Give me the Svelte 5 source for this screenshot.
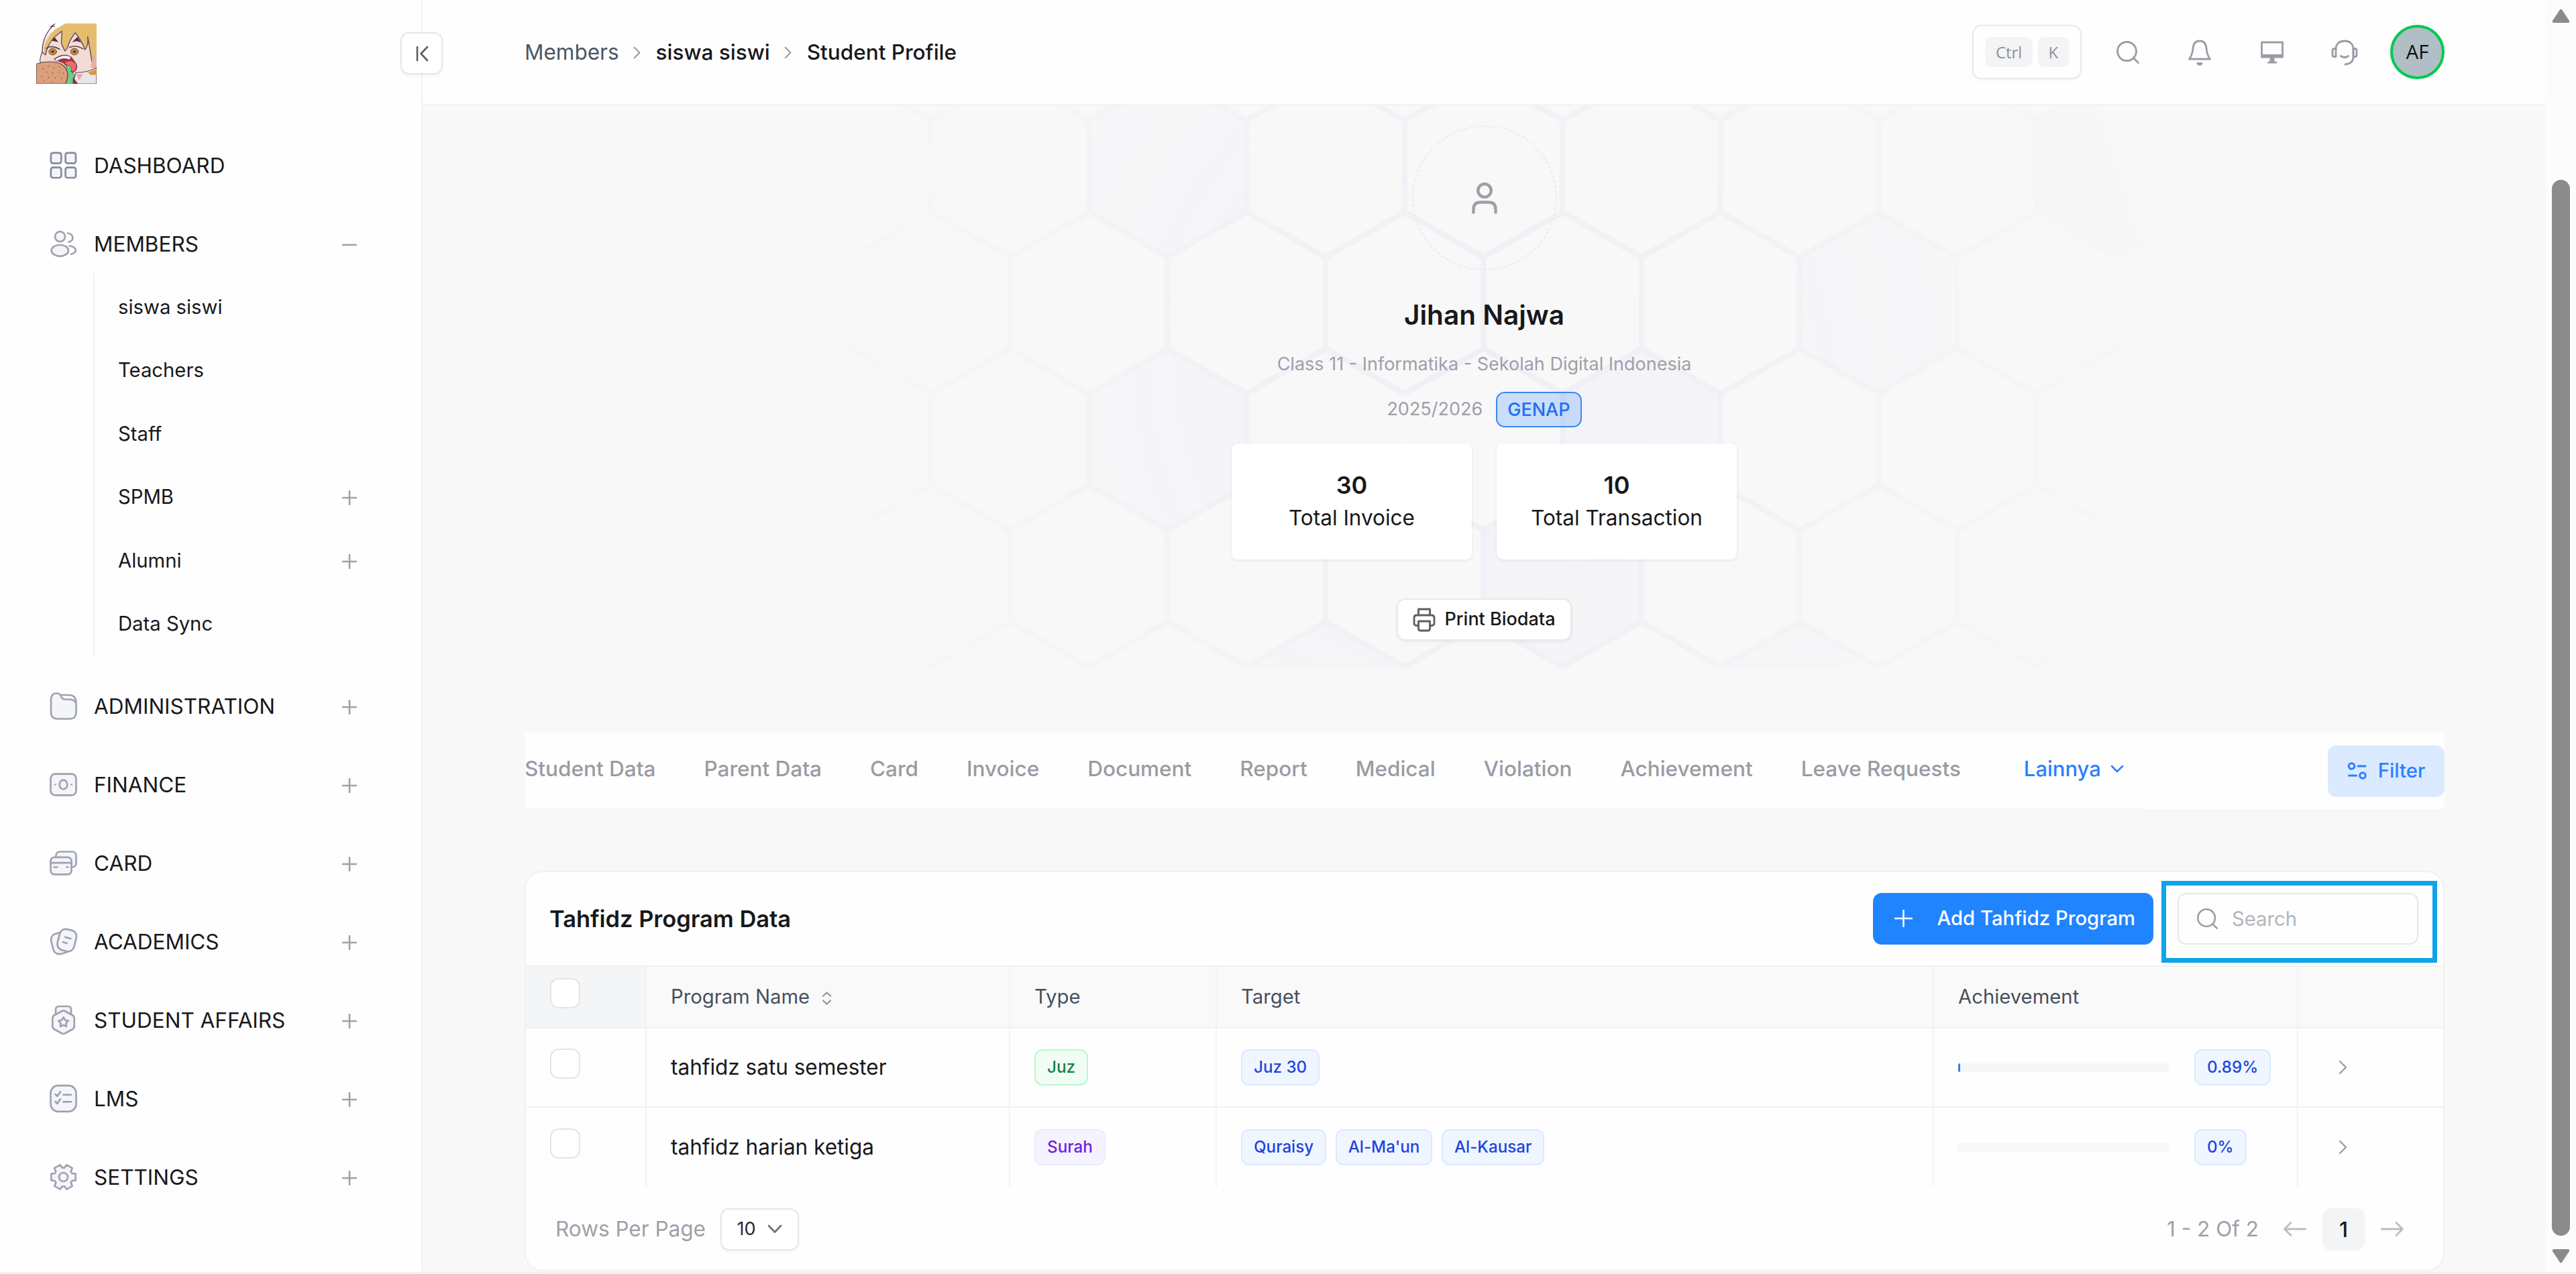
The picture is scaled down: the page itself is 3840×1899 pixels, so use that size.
<script>
    const menu = [
        { id: "dashboard", label: "DASHBOARD" },
        {
            id: "members",
            label: "MEMBERS",
            open: true,
            children: [
                { label: "siswa siswi" },
                { label: "Teachers" },
                { label: "Staff" },
                { label: "SPMB", more: true },
                { label: "Alumni", more: true },
                { label: "Data Sync" },
            ],
        },
        { id: "administration", label: "ADMINISTRATION", more: true },
        { id: "finance", label: "FINANCE", more: true },
        { id: "card", label: "CARD", more: true },
        { id: "academics", label: "ACADEMICS", more: true },
        { id: "affairs", label: "STUDENT AFFAIRS", more: true },
        { id: "lms", label: "LMS", more: true },
        { id: "settings", label: "SETTINGS", more: true },
    ];

    const tabs = [
        "Student Data",
        "Parent Data",
        "Card",
        "Invoice",
        "Document",
        "Report",
        "Medical",
        "Violation",
        "Achievement",
        "Leave Requests",
    ];

    const stats = [
        { value: 30, label: "Total Invoice" },
        { value: 10, label: "Total Transaction" },
    ];

    const programs = [
        {
            name: "tahfidz satu semester",
            type: "Juz",
            tone: "green",
            targets: ["Juz 30"],
            progress: 0.89,
        },
        {
            name: "tahfidz harian ketiga",
            type: "Surah",
            tone: "violet",
            targets: ["Quraisy", "Al-Ma'un", "Al-Kausar"],
            progress: 0,
        },
    ];

    // honeycomb behind the profile
    const HEX_W = 235.5;
    const HEX_PITCH = 203.5;

    function hexPoints(cx, cy) {
        const w = HEX_W / 2;
        return [
            [cx, cy - 135],
            [cx + w, cy - 68],
            [cx + w, cy + 68],
            [cx, cy + 135],
            [cx - w, cy + 68],
            [cx - w, cy - 68],
        ]
            .map((p) => p.join(","))
            .join(" ");
    }

    const tinted = ["1:-2", "3:-2", "3:1", "4:1", "2:3", "5:-1", "5:2", "1:4"];
    const hexes = [];
    for (let row = 0; row < 6; row++) {
        for (let col = -5; col <= 5; col++) {
            const shift = row % 2 ? 0 : -HEX_W / 2;
            hexes.push({
                points: hexPoints(2211.5 + shift + col * HEX_W, 44.5 + row * HEX_PITCH),
                tint: tinted.includes(`${row}:${col}`),
            });
        }
    }

    function gearPath() {
        const pts = [];
        for (let k = 0; k < 6; k++) {
            for (const [off, r] of [
                [-23, 14],
                [-15, 18.8],
                [15, 18.8],
                [23, 14],
            ]) {
                const a = ((k * 60 + off) * Math.PI) / 180;
                pts.push(
                    `${(22.5 + r * Math.cos(a)).toFixed(1)} ${(22.5 + r * Math.sin(a)).toFixed(1)}`,
                );
            }
        }
        return "M" + pts.join("L") + "Z";
    }
</script>

{#snippet menuIcon(id)}
    <svg class="menu-icon" class:strong={id === "dashboard"} viewBox="0 0 45 45">
        {#if id === "dashboard"}
            <rect x="3.9" y="3.9" width="15.4" height="15.4" rx="3" />
            <rect x="25.6" y="3.9" width="15.4" height="15.4" rx="3" />
            <rect x="3.9" y="25.6" width="15.4" height="15.4" rx="3" />
            <rect x="25.6" y="25.6" width="15.4" height="15.4" rx="3" />
        {:else if id === "members"}
            <circle cx="17.5" cy="11.7" r="7.5" />
            <ellipse cx="17.3" cy="32.4" rx="12.6" ry="8.4" />
            <path class="line" d="M29 6.5c9 1 10 12 1.5 13.2M31.5 25.5c12 2 12 10 2.5 12.3" />
        {:else if id === "administration"}
            <path class="line" d="M17.5 6H31c6 0 10 3.5 10.5 11" />
            <path
                d="M4 14C4 6 7 3.5 12 3.5c6 0 6 2.5 7.5 5.5 1 2.5 2.5 3.5 5.5 3.5h6c7 0 10.5 2.5 10.5 8.5v10c0 7.5-3 10.5-10.5 10.5H14.5C7 41.5 4 38.5 4 31Z"
            />
        {:else if id === "finance"}
            <rect x="3.5" y="6.7" width="38" height="31.6" rx="6.5" />
            <ellipse cx="22.5" cy="22.5" rx="5.8" ry="6.8" />
            <path class="line" d="M10.3 22.5h.2M34.5 22.5h.2" />
        {:else if id === "card"}
            <rect x="11.5" y="5.5" width="30" height="23" rx="5.5" />
            <rect x="3.5" y="13.8" width="31" height="25.5" rx="5.5" />
            <path class="line" d="M3.5 22.2h31M8.5 28.5h5M27.5 28.5h2" />
        {:else if id === "academics"}
            <rect x="5.5" y="9.5" width="25" height="31" rx="9" transform="rotate(-14 18 25)" />
            <rect x="15" y="4.5" width="25.5" height="32" rx="9" transform="rotate(14 27.7 20.5)" />
            <path class="line" d="M25 15.7l8.2 2.4M22 23.3l5.5 1.7" />
        {:else if id === "affairs"}
            <path d="M11 14V7c0-3.5 2-5 5-5h13c3 0 5 1.5 5 5v7" />
            <path
                d="M20 9.2q2.5-1.6 5 0l11 6q2.7 1.6 2.7 4.5v12q0 2.9-2.7 4.5l-11 6q-2.5 1.6-5 0l-11-6q-2.7-1.6-2.7-4.5v-12q0-2.9 2.7-4.5z"
            />
            <path
                d="M22.5 18.5l2.5 4 4.7 1-3.2 3.6.5 4.8-4.5-1.9-4.5 1.9.5-4.8-3.2-3.6 4.7-1z"
            />
        {:else if id === "lms"}
            <rect x="3.5" y="3.2" width="38" height="38.6" rx="11" />
            <path class="line" d="M10.5 16l3 3 4.3-6.5M10.5 27l3 3 4.3-6.5M22.5 16.8h11.5M22.5 27.3h11.5" />
        {:else}
            <path d={gearPath()} />
            <circle cx="22.5" cy="22.5" r="6.5" />
        {/if}
    </svg>
{/snippet}

{#snippet toggle(open)}
    <svg class="toggle" viewBox="0 0 22 22">
        <path d={open ? "M1 11h20" : "M1 11h20M11 1v20"} />
    </svg>
{/snippet}

{#snippet chevron()}
    <svg class="chevron" viewBox="0 0 14 22"><path d="M2 2l9 9-9 9" /></svg>
{/snippet}

{#snippet searchIcon()}
    <svg class="search-icon" viewBox="0 0 36 36">
        <circle cx="16.5" cy="16.5" r="14" />
        <path d="M26.5 26.5l7 7" />
    </svg>
{/snippet}

<div class="page">
    <div class="shell">
        <aside>
            <div class="brand">
                <svg class="logo" viewBox="0 0 202 253" preserveAspectRatio="none">
                    <rect width="202" height="253" fill="#fff" />
                    <path d="M44 40C20 80 14 120 20 140L10 175 30 253H202V30L100 10Z" fill="#f3dcd6" />
                    <path
                        d="M98 0H202V150L188 170Q178 130 174 62 176 92 163 110 152 68 131 39 108 76 104 104L96 116Q88 96 84 84L86 32Q66 50 48 72 34 100 31 132 14 90 62 26Z"
                        fill="#e4bd6f"
                    />
                    <path
                        d="M62 2Q20 50 20 120L31 132Q36 92 60 58L86 32 84 84 96 116 104 104Q112 66 131 39 152 72 163 110 176 90 172 54L188 170M190 150L202 130M20 120Q8 160 16 165M62 2l-14 12 14-2"
                        fill="none"
                        stroke="#634055"
                        stroke-width="3"
                    />
                    <path d="M52 72l10-14 12 20-16-4zM120 78l18-22 12 24-14-6z" fill="#4b2f3d" />
                    <path d="M34 104q18-16 44 4M112 100q20-12 44 6" fill="none" stroke="#4b2f3d" stroke-width="4" />
                    <ellipse cx="55" cy="118" rx="13" ry="14" fill="#c88b31" stroke="#634055" stroke-width="2" />
                    <ellipse cx="128" cy="118" rx="13" ry="14" fill="#c88b31" stroke="#634055" stroke-width="2" />
                    <circle cx="55" cy="118" r="5" fill="#4b2f3d" />
                    <circle cx="128" cy="118" r="5" fill="#4b2f3d" />
                    <path d="M60 150Q90 120 116 140L134 170Q140 196 122 206L92 166Z" fill="#b5303b" stroke="#634055" stroke-width="3" />
                    <path d="M62 150Q90 124 116 140L112 152Q90 140 68 158Z" fill="#fff" stroke="#634055" stroke-width="2" />
                    <path d="M96 166q16-18 36 2 6 24-10 34z" fill="#f2686c" />
                    <path d="M188 150l14-24v60q-22 6-20-10z" fill="#e7b0a4" />
                    <path d="M132 206q40 0 70-20v67h-80z" fill="#e8e6e8" stroke="#634055" stroke-width="3" />
                    <path d="M172 206l30-14v20q-10 6-20 2z" fill="#d59a34" />
                    <path d="M134 212h22l-12 26z" fill="#e9a3a1" />
                    <path d="M104 172l14 12-2 18 12 14-6 20 6 17H92z" fill="#6bcf83" stroke="#41805a" stroke-width="2" />
                    <path d="M124 226l16 27h-18z" fill="#8c2944" />
                    <path d="M0 170C30 156 66 158 84 170 108 188 110 222 98 253H0Z" fill="#dc9f7b" stroke="#634055" stroke-width="3" />
                    <path
                        d="M22 190h2M40 178h2M58 186h2M76 182h2M34 204h2M54 206h2M76 204h2M90 208h2M18 222h2M40 226h2M62 228h2M84 230h2M26 242h2M52 244h2"
                        stroke="#7b4a39"
                        stroke-width="3"
                    />
                </svg>
                <button class="collapse" aria-label="Collapse">
                    <svg viewBox="0 0 20 24"><path d="M3 2v20M18 2L8.5 12 18 22" /></svg>
                </button>
            </div>
            <nav>
                {#each menu as item}
                    <div class="menu-row">
                        {@render menuIcon(item.id)}
                        <span>{item.label}</span>
                        {#if item.open || item.more}{@render toggle(item.open)}{/if}
                    </div>
                    {#if item.children}
                        <div class="submenu">
                            {#each item.children as child}
                                <div class="sub-row">
                                    <span>{child.label}</span>
                                    {#if child.more}{@render toggle(false)}{/if}
                                </div>
                            {/each}
                        </div>
                    {/if}
                {/each}
            </nav>
        </aside>

        <main>
            <header>
                <div class="crumbs">
                    <span class="muted">Members</span>
                    {@render chevron()}
                    <span>siswa siswi</span>
                    {@render chevron()}
                    <span>Student Profile</span>
                </div>
                <div class="tools">
                    <div class="shortcut"><kbd>Ctrl</kbd><kbd>K</kbd></div>
                    {@render searchIcon()}
                    <svg class="tool bell" viewBox="0 0 38 40">
                        <path d="M19 3c-7 0-9.500 5-10 11-.5 7-2 11-5.500 16h31c-3.500-5-5-9-5.500-16-.5-6-3-11-10-11z" />
                        <path d="M16 36.500c1 2.500 5 2.500 6 0z" fill="currentColor" />
                    </svg>
                    <svg class="tool monitor" viewBox="0 0 38 40">
                        <path d="M3.500 5h31v22h-31z" />
                        <path d="M3 23h32v5H22l1 6h3v2.500H12V34h3l1-6H3z" fill="currentColor" stroke="none" />
                    </svg>
                    <svg class="tool headset" viewBox="0 0 40 40">
                        <path d="M7 15C7 7 13 3 20 3s13 4 13 12v12c0 6-4 10-12 11" />
                        <path d="M7 14.500H4.500Q2 14.500 2 17v7q0 2.500 2.500 2.500H7zM33 14.500h2.500Q38 14.500 38 17v7q0 2.500-2.500 2.500H33z" />
                        <path d="M14.500 25.500q5.500 4 11 0" />
                    </svg>
                    <div class="avatar">AF</div>
                </div>
            </header>

            <section class="hero">
                <svg class="comb" viewBox="630 157 3165 935">
                    <defs>
                        <radialGradient
                            id="fade"
                            gradientUnits="userSpaceOnUse"
                            cx="2212"
                            cy="560"
                            r="1050"
                        >
                            <stop offset="0" stop-color="#fff" />
                            <stop offset=".3" stop-color="#fff" stop-opacity=".75" />
                            <stop offset=".55" stop-color="#fff" stop-opacity=".38" />
                            <stop offset="1" stop-color="#fff" stop-opacity="0" />
                        </radialGradient>
                        <mask id="vignette" maskUnits="userSpaceOnUse" x="1160" y="157" width="2100" height="840">
                            <rect x="1160" y="157" width="2100" height="840" fill="url(#fade)" />
                        </mask>
                    </defs>
                    {#each hexes as hex}
                        {#if hex.tint}
                            <polygon class="tint" points={hex.points} mask="url(#vignette)" />
                        {/if}
                    {/each}
                    <g mask="url(#vignette)">
                        {#each hexes as hex}
                            <polygon points={hex.points} />
                        {/each}
                        <path d="M2093.700 594v122" class="gap" />
                    </g>
                </svg>
                <div class="profile">
                    <div class="photo">
                        <svg class="ring" viewBox="0 0 216 216"><circle cx="108" cy="108" r="107" /></svg>
                        <svg class="person" viewBox="0 0 40 48">
                            <circle cx="20" cy="13" r="9.800" />
                            <path d="M3.500 45.500v-4c0-8 4-11 10-11h13c6 0 10 3 10 11v4" />
                        </svg>
                    </div>
                    <h1>Jihan Najwa</h1>
                    <p class="school">Class 11 - Informatika - Sekolah Digital Indonesia</p>
                    <p class="year">2025/2026 <span class="term">GENAP</span></p>
                    <div class="stats">
                        {#each stats as stat}
                            <div class="stat">
                                <strong>{stat.value}</strong>
                                <span>{stat.label}</span>
                            </div>
                        {/each}
                    </div>
                    <button class="print">
                        <svg viewBox="0 0 34 36">
                            <path d="M8.500 11V2h17v9M8.500 26.500H6Q2 26.500 2 22.500V15q0-4 4-4h22q4 0 4 4v7.500q0 4-4 4h-2.500" />
                            <path d="M8.500 20h17v11q0 3-3 3h-11q-3 0-3-3z" />
                        </svg>
                        Print Biodata
                    </button>
                </div>
            </section>

            <section class="tabbar">
                <div class="tabs">
                    {#each tabs as tab}
                        <span>{tab}</span>
                    {/each}
                    <span class="active">
                        Lainnya
                        <svg viewBox="0 0 20 12"><path d="M2 2l8 8 8-8" /></svg>
                    </span>
                </div>
                <div class="tab-side">
                    <button class="filter">
                        <svg viewBox="0 0 30 28">
                            <circle cx="6.500" cy="7" r="4.300" />
                            <circle cx="23" cy="21" r="4.300" />
                            <path d="M16 7h11M2.500 21h11" />
                        </svg>
                        Filter
                    </button>
                </div>
            </section>

            <section class="card">
                <div class="card-head">
                    <h2>Tahfidz Program Data</h2>
                    <button class="add">
                        <svg viewBox="0 0 27 26"><path d="M1 13h25M13.500 1v24" /></svg>
                        Add Tahfidz Program
                    </button>
                    <div class="search-wrap">
                        <div class="search">
                            {@render searchIcon()}
                            <span>Search</span>
                        </div>
                        <div class="highlight"></div>
                    </div>
                </div>
                <table>
                    <colgroup>
                        <col class="c-check" />
                        <col class="c-name" />
                        <col class="c-type" />
                        <col class="c-target" />
                        <col class="c-progress" />
                        <col />
                    </colgroup>
                    <thead>
                        <tr>
                            <th class="check"><i></i></th>
                            <th>
                                Program Name
                                <svg class="sort" viewBox="0 0 15 20"><path d="M2 6.500l5.500-5 5.500 5M2 13.500l5.500 5 5.500-5" /></svg>
                            </th>
                            <th>Type</th>
                            <th>Target</th>
                            <th>Achievement</th>
                            <th></th>
                        </tr>
                    </thead>
                    <tbody>
                        {#each programs as program}
                            <tr>
                                <td class="check"><i></i></td>
                                <td class="name">{program.name}</td>
                                <td><span class="chip {program.tone}">{program.type}</span></td>
                                <td>
                                    <div class="chips">
                                        {#each program.targets as target}
                                            <span class="chip">{target}</span>
                                        {/each}
                                    </div>
                                </td>
                                <td>
                                    <div class="meter">
                                        <div class="track">
                                            <div class="fill" style:width="{program.progress}%"></div>
                                        </div>
                                        <span class="chip">{program.progress}%</span>
                                    </div>
                                </td>
                                <td class="go">{@render chevron()}</td>
                            </tr>
                        {/each}
                    </tbody>
                </table>
                <div class="card-foot">
                    <span>Rows Per Page</span>
                    <div class="select">
                        10
                        <svg viewBox="0 0 22 14"><path d="M2 2l9 9.500L20 2" /></svg>
                    </div>
                    <span class="range">1 - 2 Of 2</span>
                    <svg class="arrow" viewBox="0 0 34 24"><path d="M33 12H2M11 2.500L1.500 12l9.500 9.500" /></svg>
                    <div class="current">1</div>
                    <svg class="arrow" viewBox="0 0 34 24"><path d="M1 12h31M23 2.500l9.500 9.500-9.500 9.500" /></svg>
                </div>
            </section>
        </main>

        <div class="scrollbar">
            <svg viewBox="0 0 27 21"><path d="M11.500 2q2-3 4 0l10.500 16q1 3-2 3H3q-3 0-2-3z" /></svg>
            <div class="thumb"></div>
            <svg viewBox="0 0 27 21"><path d="M11.500 19q2 3 4 0L26 3q1-3-2-3H3Q0 0 1 3z" /></svg>
        </div>
    </div>
    <div class="strip"></div>
</div>

<style>
    :global(body) {
        margin: 0;
        background: #f8f8f8;
    }
    .page {
        width: 3840px;
        height: 1899px;
        overflow: hidden;
        font-family: Inter, sans-serif;
        font-size: 31.5px;
        line-height: 1.2;
        color: #18181b;
    }
    .page * {
        box-sizing: border-box;
    }
    svg {
        display: block;
        flex: none;
        fill: none;
        stroke-linecap: round;
        stroke-linejoin: round;
    }
    button {
        font: inherit;
        padding: 0;
        border: 0;
        display: flex;
        align-items: center;
    }
    h1,
    h2,
    p {
        margin: 0;
    }
    .shell {
        display: flex;
        height: 1896px;
    }
    .strip {
        height: 3px;
        background: #f8eff1;
    }

    /* sidebar */
    aside {
        width: 630px;
        background: #fefefe;
        border-right: 2px solid #f2f2f3;
    }
    .brand {
        display: flex;
        justify-content: space-between;
        align-items: center;
        height: 159px;
        padding-left: 54px;
        margin-right: -32px;
        margin-bottom: 29px;
    }
    .logo {
        width: 90px;
        height: 90px;
    }
    .collapse {
        position: relative;
        z-index: 2;
        justify-content: center;
        width: 63px;
        height: 63px;
        background: #fff;
        border: 2px solid #e6e6e8;
        border-radius: 13px;
        box-shadow: 0 2px 4px rgba(0, 0, 0, 0.05);
    }
    .collapse svg {
        width: 20px;
        height: 24px;
        stroke: #5c5c63;
        stroke-width: 2.6;
    }
    .menu-row {
        display: flex;
        align-items: center;
        height: 117px;
        padding: 0 96px 0 72px;
    }
    .menu-row span {
        flex: 1;
        margin-left: 23px;
    }
    .menu-icon {
        width: 45px;
        height: 45px;
        stroke: #a0a2b3;
        stroke-width: 2.7;
        fill: #f4f5f8;
    }
    .menu-icon.strong {
        stroke: #878a9c;
    }
    .menu-icon .line {
        fill: none;
    }
    .toggle {
        width: 22px;
        height: 22px;
        margin-top: 3px;
        stroke: #a1a1a6;
        stroke-width: 2.6;
    }
    .submenu {
        margin: -15px 0 15px 139px;
        padding-top: 3px;
        height: 572px;
        border-left: 2px solid #f1f1f3;
    }
    .sub-row {
        display: flex;
        align-items: center;
        height: 94.5px;
        padding: 0 96px 0 35px;
        font-size: 29.25px;
    }
    .sub-row span {
        flex: 1;
    }

    /* header */
    main {
        width: 3165px;
        background: #f8f8f8;
    }
    header {
        display: flex;
        align-items: center;
        justify-content: space-between;
        height: 157px;
        padding: 0 151px 0 152px;
        background: #fefefe;
        border-bottom: 2px solid #f3f3f4;
    }
    .crumbs {
        display: flex;
        align-items: center;
        font-weight: 500;
    }
    .crumbs .muted {
        color: #4b5563;
        font-weight: 400;
    }
    .chevron {
        width: 14px;
        height: 22px;
        stroke: #9b9ba1;
        stroke-width: 2.4;
    }
    .crumbs .chevron {
        margin: 2px 20.5px 0;
        height: 19px;
    }
    .tools {
        display: flex;
        align-items: center;
        color: #9b9ba5;
    }
    .shortcut {
        display: flex;
        align-items: center;
        justify-content: center;
        gap: 8px;
        width: 163px;
        height: 81px;
        margin-right: 51px;
        border: 2px solid #e9e9eb;
        border-radius: 14px;
        box-shadow: 0 2px 4px rgba(0, 0, 0, 0.04);
    }
    kbd {
        padding: 0 15.5px;
        line-height: 45px;
        font-family: "Open Sans", sans-serif;
        font-size: 24px;
        border-radius: 9px;
        background: #f4f4f5;
        color: #8f929c;
    }
    .search-icon {
        width: 36px;
        height: 36px;
        stroke: #9b9ba1;
        stroke-width: 2.8;
    }
    .tool {
        width: 38px;
        height: 40px;
        stroke: currentColor;
        stroke-width: 2.8;
    }
    .bell {
        margin-left: 70px;
    }
    .monitor {
        margin-left: 70px;
    }
    .headset {
        width: 40px;
        margin-left: 69px;
    }
    .avatar {
        display: flex;
        align-items: center;
        justify-content: center;
        width: 81px;
        height: 81px;
        margin-left: 48px;
        border: 4.5px solid #00c951;
        border-radius: 50%;
        background: #b0bec5;
        color: #0c0c0e;
        font-family: "Open Sans", sans-serif;
        font-size: 29.25px;
    }

    /* profile */
    .hero {
        display: grid;
        height: 935px;
    }
    .comb,
    .profile {
        grid-area: 1 / 1;
    }
    .comb {
        width: 3165px;
        height: 935px;
    }
    .comb polygon {
        stroke: #eeeef5;
        stroke-width: 8;
    }
    .comb .tint {
        fill: #f3f3f8;
        stroke: none;
    }
    .comb .gap {
        stroke: #f8f8f8;
        stroke-width: 10;
    }
    .profile {
        display: flex;
        flex-direction: column;
        align-items: center;
        padding-top: 30px;
    }
    .photo {
        display: grid;
        place-items: center;
        width: 216px;
        height: 216px;
    }
    .photo svg {
        grid-area: 1 / 1;
    }
    .ring {
        width: 216px;
        height: 216px;
        stroke: #e8e8ea;
        stroke-width: 1.6;
        stroke-dasharray: 4 3.5;
        stroke-linecap: butt;
    }
    .person {
        width: 40px;
        height: 48px;
        stroke: #9f9fa9;
        stroke-width: 4.5;
    }
    h1 {
        margin-top: 43px;
        font-size: 40.5px;
        line-height: 48px;
        font-weight: 600;
    }
    .school {
        margin-top: 33px;
        font-size: 27px;
        line-height: 32px;
        color: #9f9fa9;
    }
    .year {
        display: flex;
        align-items: center;
        gap: 20px;
        margin-top: 24px;
        height: 54px;
        font-size: 27px;
        color: #9f9fa9;
    }
    .term {
        line-height: 49px;
        padding: 0 15px;
        border: 2px solid #3d86f3;
        border-radius: 13px;
        background: rgba(43, 127, 255, 0.22);
        color: #1d6ff2;
        font-weight: 500;
    }
    .stats {
        display: flex;
        gap: 37px;
        margin-top: 24px;
    }
    .stat {
        display: flex;
        flex-direction: column;
        align-items: center;
        width: 358px;
        height: 173px;
        padding-top: 40px;
        background: #fff;
        border-radius: 9px;
        box-shadow: 0 1px 4px rgba(0, 0, 0, 0.09);
    }
    .stat strong {
        font-size: 36px;
        line-height: 45px;
        font-weight: 600;
    }
    .stat span {
        margin-top: 8px;
        font-size: 31.5px;
        line-height: 36px;
    }
    .print {
        gap: 13px;
        height: 63px;
        margin-top: 58px;
        padding: 0 22px;
        border: 2px solid #e8e8ea;
        border-radius: 13px;
        background: #fff;
        box-shadow: 0 2px 4px rgba(0, 0, 0, 0.05);
        color: #18181b;
        font-size: 27px;
        font-weight: 500;
    }
    .print svg {
        width: 34px;
        height: 36px;
        stroke: #5c5c63;
        stroke-width: 2.8;
    }

    /* tabs */
    .tabbar {
        display: flex;
        align-items: flex-start;
        margin: 0 151px 0 152px;
        height: 114px;
    }
    .tabs {
        display: flex;
        align-items: center;
        gap: 72px;
        width: 2412px;
        height: 112px;
        padding-bottom: 5px;
        background: #fefefe;
        color: #9a9ba3;
        font-weight: 500;
    }
    .tabs .active {
        display: flex;
        align-items: center;
        gap: 14px;
        margin-left: 22px;
        color: #2b7fff;
        font-size: 31px;
    }
    .active svg {
        width: 20px;
        height: 12px;
        stroke: #2b7fff;
        stroke-width: 2.6;
    }
    .tab-side {
        display: flex;
        flex: 1;
        justify-content: flex-end;
        height: 114px;
        padding-top: 19px;
        background: #fefefe;
    }
    .filter {
        justify-content: center;
        gap: 16px;
        width: 174px;
        height: 77px;
        padding-bottom: 2px;
        border-radius: 13px;
        background: #dbeafe;
        color: #2b7fff;
        font-size: 29.25px;
        font-weight: 500;
    }
    .filter svg {
        width: 30px;
        height: 28px;
        stroke: #2b7fff;
        stroke-width: 3;
    }

    /* program table */
    .card {
        margin: 92px 151px 0 152px;
        height: 597px;
        border: 2px solid #f1f1f3;
        border-radius: 27px;
        overflow: hidden;
        background: #fefefe;
    }
    .card-head {
        display: flex;
        align-items: center;
        height: 141px;
        padding: 0 37px 0 35px;
        border-bottom: 2px solid #f1f1f3;
    }
    h2 {
        flex: 1;
        font-size: 34.4px;
        font-weight: 600;
    }
    .add {
        gap: 37px;
        height: 77px;
        margin-right: 36px;
        padding: 0 27px 2px 32px;
        border-radius: 13px;
        background: #2184ff;
        color: #fff;
        font-size: 29.25px;
        font-weight: 500;
    }
    .add svg {
        width: 27px;
        height: 26px;
        stroke: #fff;
        stroke-width: 2.6;
    }
    .search-wrap {
        position: relative;
    }
    .search {
        display: flex;
        align-items: center;
        gap: 20px;
        width: 359px;
        height: 77px;
        padding-left: 26px;
        border: 2px solid #e6e6e8;
        border-radius: 13px;
        color: #b3b5bb;
        font-size: 29.25px;
    }
    .search .search-icon {
        width: 33px;
        height: 33px;
    }
    .highlight {
        position: absolute;
        inset: -18px -28px -27px -24px;
        border: 7px solid #0ea5e9;
    }
    table {
        width: 100%;
        table-layout: fixed;
        border-collapse: separate;
        border-spacing: 0;
    }
    .c-check {
        width: 180px;
    }
    .c-name {
        width: 542px;
    }
    .c-type {
        width: 308px;
    }
    .c-target {
        width: 1069px;
    }
    .c-progress {
        width: 543px;
    }
    th,
    td {
        padding: 0 0 0 36px;
        border-right: 2px solid #f3f3f5;
        border-bottom: 2px solid #f1f1f3;
        text-align: left;
    }
    th:last-child,
    td:last-child {
        border-right: 0;
    }
    tbody tr:last-child td {
        border-bottom: 0;
    }
    th {
        height: 92px;
        background: #f9f9fa;
        color: #45505f;
        font-size: 29.25px;
        font-weight: 400;
    }
    th.check {
        background: #f3f5f7;
    }
    td {
        height: 118px;
    }
    .check i {
        display: block;
        width: 45px;
        height: 45px;
        margin-bottom: 11px;
        border: 2px solid #e4e4e7;
        border-radius: 13px;
        background: #fff;
    }
    .sort {
        display: inline-block;
        width: 15px;
        height: 20px;
        margin-left: 10px;
        vertical-align: -2px;
        stroke: #8f939b;
        stroke-width: 2.2;
    }
    .chips {
        display: flex;
        gap: 13.5px;
    }
    .chip {
        display: inline-block;
        padding: 0 17px;
        border: 2px solid #dbeafe;
        border-radius: 12px;
        background: #eff6ff;
        color: #1d45e0;
        font-size: 24.2px;
        line-height: 50px;
        font-weight: 500;
        vertical-align: middle;
    }
    .chip.green {
        border-color: #b9f8cf;
        background: #f0fdf4;
        color: #15803d;
    }
    .chip.violet {
        border-color: #ede9fe;
        background: #f5f3ff;
        color: #7022e0;
    }
    .meter {
        display: flex;
        align-items: center;
        gap: 38px;
    }
    .track {
        width: 314px;
        height: 13px;
        background: #f7f7f8;
    }
    .fill {
        height: 13px;
        border-radius: 6px 0 0 6px;
        background: #2b7fff;
    }
    .go {
        padding-left: 60px;
    }
    .card-foot {
        display: flex;
        align-items: center;
        height: 126px;
        padding: 0 59px 0 44px;
        color: #9f9fa9;
    }
    .select {
        display: flex;
        align-items: center;
        justify-content: center;
        gap: 18px;
        width: 117px;
        height: 63px;
        margin-left: 22px;
        border: 2px solid #e6e6e8;
        border-radius: 13px;
        box-shadow: 0 2px 4px rgba(0, 0, 0, 0.04);
        background: #fff;
        color: #27272a;
        font-size: 27px;
    }
    .select svg {
        width: 22px;
        height: 14px;
        stroke: #71717a;
        stroke-width: 2.8;
    }
    .range {
        margin-left: auto;
        margin-right: 37px;
    }
    .arrow {
        width: 34px;
        height: 24px;
        stroke: #bdbdc2;
        stroke-width: 2.8;
    }
    .current {
        width: 63px;
        margin: 0 24px;
        line-height: 63px;
        border-radius: 13px;
        background: #f3f4f6;
        color: #18181b;
        font-weight: 500;
        text-align: center;
    }

    /* window scrollbar */
    .scrollbar {
        display: flex;
        flex-direction: column;
        align-items: center;
        width: 45px;
        padding-top: 13px;
        background: #fcfcfc;
    }
    .scrollbar svg {
        width: 27px;
        height: 21px;
        fill: #8b8b8b;
    }
    .thumb {
        width: 27px;
        height: 1574px;
        margin: 234px 0 20px;
        border-radius: 14px;
        background: #8b8b8b;
    }
</style>
